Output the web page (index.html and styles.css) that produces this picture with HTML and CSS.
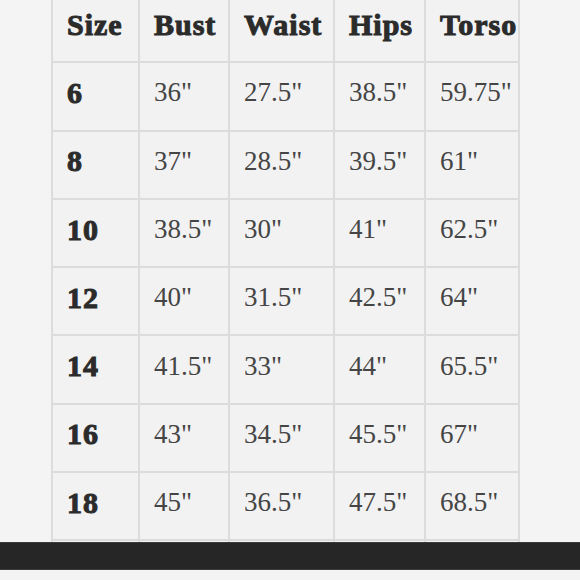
FILE: index.html
```html
<!DOCTYPE html>
<html>
<head>
<meta charset="utf-8">
<link rel="stylesheet" href="styles.css">
</head>
<body>
<div class="page">
  <div class="chart">
    <div class="grid">
      <div class="cell head">Size</div><div class="cell head">Bust</div><div class="cell head">Waist</div><div class="cell head">Hips</div><div class="cell head">Torso</div>
      <div class="cell head">6</div><div class="cell">36"</div><div class="cell">27.5"</div><div class="cell">38.5"</div><div class="cell">59.75"</div>
      <div class="cell head">8</div><div class="cell">37"</div><div class="cell">28.5"</div><div class="cell">39.5"</div><div class="cell">61"</div>
      <div class="cell head">10</div><div class="cell">38.5"</div><div class="cell">30"</div><div class="cell">41"</div><div class="cell">62.5"</div>
      <div class="cell head">12</div><div class="cell">40"</div><div class="cell">31.5"</div><div class="cell">42.5"</div><div class="cell">64"</div>
      <div class="cell head">14</div><div class="cell">41.5"</div><div class="cell">33"</div><div class="cell">44"</div><div class="cell">65.5"</div>
      <div class="cell head">16</div><div class="cell">43"</div><div class="cell">34.5"</div><div class="cell">45.5"</div><div class="cell">67"</div>
      <div class="cell head">18</div><div class="cell">45"</div><div class="cell">36.5"</div><div class="cell">47.5"</div><div class="cell">68.5"</div>
      <div class="cell head"></div><div class="cell"></div><div class="cell"></div><div class="cell"></div><div class="cell"></div>
    </div>
  </div>
  <div class="bar"></div>
</div>
</body>
</html>
```

FILE: styles.css
```css
html, body {
  margin: 0;
  padding: 0;
  background: #f3f3f3;
}
.page {
  width: 580px;
  height: 580px;
  overflow: hidden;
}
.chart {
  height: 542px;
  overflow: hidden;
  padding-left: 51px;
  background: #f4f4f4;
}
.grid {
  margin-top: -5px;
  display: grid;
  grid-template-columns: 87px 90px 105px 91px 94px;
  grid-auto-rows: 68.3px;
  width: max-content;
  border-left: 2px solid #dcdcdc;
  background: #f2f2f2;
}
.cell {
  box-sizing: border-box;
  border-right: 2px solid #dcdcdc;
  border-bottom: 2px solid #dcdcdc;
  display: flex;
  align-items: center;
  padding: 0 0 7px 14px;
  font-family: "Liberation Serif", serif;
  font-size: 27px;
  color: #454545;
  white-space: nowrap;
}
.head {
  font-weight: 700;
  font-size: 30px;
  color: #2b2b2b;
  letter-spacing: 1px;
  -webkit-text-stroke: 1px #2b2b2b;
}
.bar {
  height: 28px;
  box-sizing: border-box;
  background: #262626;
  border-top: 1px solid #3a3a3a;
  border-bottom: 1px solid #3a3a3a;
}
```
